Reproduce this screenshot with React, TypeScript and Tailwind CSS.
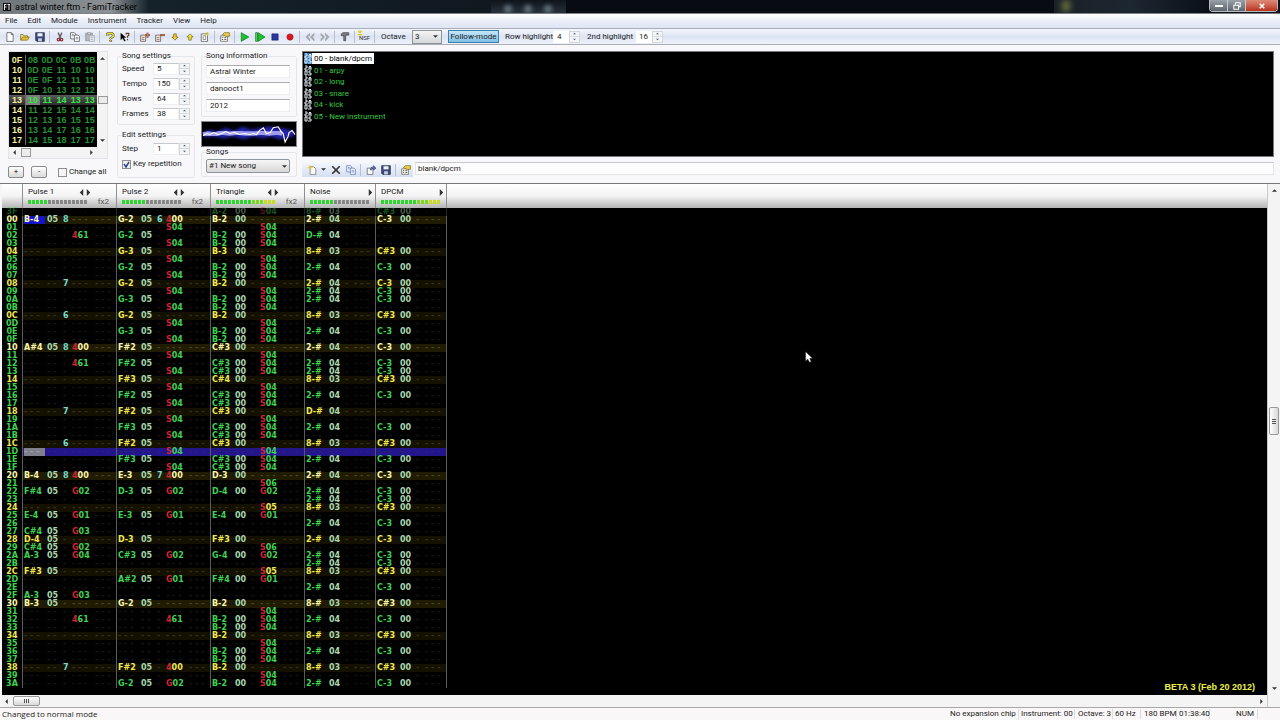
import React from 'react';
import clsx from 'clsx';

interface Channel {
  name: string;
  level: number;
  effects: number;
  arrows: 'both' | 'right';
  rows: Record<string, string>;
}

// "note inst vol fx", dots stand for empty fields
const parseRows = (source: string): Record<string, string> => {
  const rows: Record<string, string> = {};
  source.split('|').forEach((entry) => {
    const [row, ...fields] = entry.trim().split(' ');
    rows[row] = fields.join(' ');
  });
  return rows;
};

const PULSE_1 = parseRows(
  '00 B-4 05 8 . | 02 . . . 461 | 08 . . 7 . | 0C . . 6 . | 10 A#4 05 8 400 | 12 . . . 461 | 18 . . 7 . | 1C . . 6 . | ' +
    '20 B-4 05 8 400 | 22 F#4 05 . G02 | 25 E-4 05 . G01 | 27 C#4 05 . G03 | 28 D-4 05 . . | 29 C#4 05 . G02 | ' +
    '2A A-3 05 . G04 | 2C F#3 05 . . | 2F A-3 05 . G03 | 30 B-3 05 . . | 32 . . . 461 | 38 . . 7 .'
);

const PULSE_2 = parseRows(
  '00 G-2 05 6 400 | 01 . . . S04 | 02 G-2 05 . . | 03 . . . S04 | 04 G-3 05 . . | 05 . . . S04 | 06 G-2 05 . . | ' +
    '07 . . . S04 | 08 G-2 05 . . | 09 . . . S04 | 0A G-3 05 . . | 0B . . . S04 | 0C G-2 05 . . | 0D . . . S04 | ' +
    '0E G-3 05 . . | 0F . . . S04 | 10 F#2 05 . . | 11 . . . S04 | 12 F#2 05 . . | 13 . . . S04 | 14 F#3 05 . . | ' +
    '15 . . . S04 | 16 F#2 05 . . | 17 . . . S04 | 18 F#2 05 . . | 19 . . . S04 | 1A F#3 05 . . | 1B . . . S04 | ' +
    '1C F#2 05 . . | 1D . . . S04 | 1E F#3 05 . . | 1F . . . S04 | 20 E-3 05 7 400 | 22 D-3 05 . G02 | ' +
    '25 E-3 05 . G01 | 28 D-3 05 . . | 2A C#3 05 . G02 | 2D A#2 05 . G01 | 30 G-2 05 . . | 32 . . . 461 | ' +
    '38 F#2 05 . 400 | 3A G-2 05 . G02'
);

const TRIANGLE = parseRows(
  '3F A-2 00 . S04 | 00 B-2 00 . . | 01 . . . S04 | 02 B-2 00 . S04 | 03 B-2 00 . S04 | 04 B-3 00 . . | 05 . . . S04 | ' +
    '06 B-2 00 . S04 | 07 B-2 00 . S04 | 08 B-2 00 . . | 09 . . . S04 | 0A B-2 00 . S04 | 0B B-2 00 . S04 | ' +
    '0C B-2 00 . . | 0D . . . S04 | 0E B-2 00 . S04 | 0F B-2 00 . S04 | 10 C#3 00 . . | 11 . . . S04 | ' +
    '12 C#3 00 . S04 | 13 C#3 00 . S04 | 14 C#4 00 . . | 15 . . . S04 | 16 C#3 00 . S04 | 17 C#3 00 . S04 | ' +
    '18 C#3 00 . . | 19 . . . S04 | 1A C#3 00 . S04 | 1B C#3 00 . S04 | 1C C#3 00 . . | 1D . . . S04 | ' +
    '1E C#3 00 . S04 | 1F C#3 00 . S04 | 20 D-3 00 . . | 21 . . . S06 | 22 D-4 00 . G02 | 24 . . . S05 | ' +
    '25 E-4 00 . G01 | 28 F#3 00 . . | 29 . . . S06 | 2A G-4 00 . G02 | 2C . . . S05 | 2D F#4 00 . G01 | ' +
    '30 B-2 00 . . | 31 . . . S04 | 32 B-2 00 . S04 | 33 B-2 00 . S04 | 34 B-2 00 . . | 35 . . . S04 | ' +
    '36 B-2 00 . S04 | 37 B-2 00 . S04 | 38 B-2 00 . . | 39 . . . S04 | 3A B-2 00 . S04'
);

const HATS = ['00', '06', '08', '09', '0A', '0E', '10', '12', '13', '16', '1A', '1E', '20', '22', '23', '26', '28', '2A', '2B', '2E', '32', '36', '3A'];
const SNARES = ['3F', '04', '0C', '14', '1C', '24', '2C', '30', '34', '38'];

const NOISE: Record<string, string> = { '02': 'D-# 04 . .', '18': 'D-# 04 . .' };
const DPCM: Record<string, string> = {};
HATS.forEach((r) => {
  NOISE[r] = '2-# 04 . .';
  DPCM[r] = 'C-3 00 . .';
});
SNARES.forEach((r) => {
  NOISE[r] = '8-# 03 . .';
  DPCM[r] = 'C#3 00 . .';
});

const CHANNELS: Channel[] = [
  { name: 'Pulse 1', level: 5, effects: 2, arrows: 'both', rows: PULSE_1 },
  { name: 'Pulse 2', level: 6, effects: 2, arrows: 'both', rows: PULSE_2 },
  { name: 'Triangle', level: 15, effects: 2, arrows: 'both', rows: TRIANGLE },
  { name: 'Noise', level: 6, effects: 1, arrows: 'right', rows: NOISE },
  { name: 'DPCM', level: 15, effects: 1, arrows: 'right', rows: DPCM },
];

const hex = (n: number) => n.toString(16).toUpperCase().padStart(2, '0');
const ROW_NUMBERS = [0x3f, ...Array.from({ length: 0x3b }, (_, i) => i)];

const FRAMES = [
  ['0F', '08', '0D', '0C', '0B', '0B'],
  ['10', '0D', '0E', '11', '10', '10'],
  ['11', '0E', '0F', '12', '11', '11'],
  ['12', '0F', '10', '13', '12', '12'],
  ['13', '10', '11', '14', '13', '13'],
  ['14', '11', '12', '15', '14', '14'],
  ['15', '12', '13', '16', '15', '15'],
  ['16', '13', '14', '17', '16', '16'],
  ['17', '14', '15', '18', '17', '17'],
];

const INSTRUMENTS = ['00 - blank/dpcm', '01 - arpy', '02 - long', '03 - snare', '04 - kick', '05 - New instrument'];

const ICONS: Record<string, React.ReactNode> = {
  New: <path d="M3 1h7l3 3v11H3z M10 1v3h3" fill="#fff" stroke="#333" />,
  Open: (
    <>
      <path d="M1 13V4h4l1 2h6v2" fill="#f6e08a" stroke="#6b5a10" />
      <path d="M1 13l3-5h11l-3 5z" fill="#e8c33c" stroke="#6b5a10" />
    </>
  ),
  Save: (
    <>
      <path d="M1 1h14v14H3l-2-2z" fill="#3a4a78" stroke="#1b2238" />
      <path d="M4 2h8v5H4z" fill="#eef2fa" />
      <path d="M5 10h6v5H5z" fill="#c7cede" />
    </>
  ),
  Cut: (
    <>
      <path d="M5 1l4 9M11 1L7 10" stroke="#555" strokeWidth="2" />
      <circle cx="5.5" cy="12" r="2" fill="none" stroke="#8c2f36" strokeWidth="2" />
      <circle cx="10.5" cy="12" r="2" fill="none" stroke="#8c2f36" strokeWidth="2" />
    </>
  ),
  Copy: (
    <>
      <path d="M1 1h6l2 2v8H1z" fill="#fff" stroke="#333" />
      <path d="M7 5h6l2 2v8H7z" fill="#fff" stroke="#333" />
      <path d="M3 4h3M3 6h3M9 9h4M9 11h4" stroke="#555" />
    </>
  ),
  'Copy instrument': (
    <>
      <path d="M1 1h6l2 2v8H1z" fill="#eef3fd" stroke="#4a64a4" />
      <path d="M7 5h6l2 2v8H7z" fill="#eef3fd" stroke="#4a64a4" />
      <path d="M3 4h3M3 6h3M9 9h4M9 11h4" stroke="#5e78b6" />
    </>
  ),
  Paste: (
    <>
      <path d="M1 2h11v12H1z" fill="#b4b7bd" stroke="#83868c" />
      <path d="M4 1h5v3H4z" fill="#dcdfe4" stroke="#83868c" />
      <path d="M7 6h8v9H7z" fill="#e9ecf1" stroke="#94979d" />
      <path d="M9 9h4M9 12h4" stroke="#94979d" />
    </>
  ),
  About: (
    <>
      <path d="M4 6V3l2-1h5l2 2v3l-4 3v1" fill="none" stroke="#444" strokeWidth="4" />
      <path d="M4 6V3l2-1h5l2 2v3l-4 3v1" fill="none" stroke="#f0e02c" strokeWidth="2.4" />
      <circle cx="9" cy="14" r="1.6" fill="#f0e02c" stroke="#333" />
    </>
  ),
  'Context help': (
    <>
      <path d="M1 1v12l3-3 3 5 2-1-3-5h4z" fill="#000" />
      <path d="M10 4V2h4v3l-2 2v2M12 11v2" fill="none" stroke="#713a18" strokeWidth="2" />
    </>
  ),
  'Add frame': (
    <>
      <path d="M1 5h8v10H1z" fill="#f4dfd2" stroke="#444" />
      <path d="M3 9h4M3 12h4" stroke="#555" />
      <path d="M8 5h8M12 1v8" stroke="#7c3a24" strokeWidth="3" />
      <path d="M8 5h8M12 1v8" stroke="#e49c6c" />
    </>
  ),
  'Remove frame': (
    <>
      <path d="M1 5h8v10H1z" fill="#f4dfd2" stroke="#444" />
      <path d="M3 9h4M3 12h4" stroke="#555" />
      <path d="M8 5h8" stroke="#7c3a24" strokeWidth="3" />
      <path d="M8 5h8" stroke="#e49c6c" />
    </>
  ),
  'Move down': <path d="M6 3h4v5h3l-5 5-5-5h3z" fill="#f2cf33" stroke="#6b5208" />,
  'Move up': <path d="M6 13h4V8h3L8 3 3 8h3z" fill="#f5e536" stroke="#5f5a08" />,
  'Duplicate frame': (
    <>
      <path d="M2 3h10v12H2z" fill="#fff" stroke="#333" />
      <path d="M5 6h4v6H5z" fill="none" stroke="#555" />
      <path d="M9 6l5-5M10 1l4 4M12 0v6" stroke="#d4c81e" strokeWidth="1.5" />
    </>
  ),
  Properties: (
    <>
      <path d="M1 6h11v9H1z" fill="#f7f3e2" stroke="#555" />
      <path d="M3 9h2M7 9h3M3 12h2M7 12h3" stroke="#555" strokeWidth="1.5" />
      <path d="M4 4l3-3h8v6h-5z" fill="#e9cf45" stroke="#6e5d14" />
    </>
  ),
  Play: <path d="M2 1l12 7-12 7z" fill="#19c42b" stroke="#0a6b14" />,
  'Play pattern': (
    <>
      <path d="M1 1h3v14H1z" fill="#5fd36a" stroke="#0a6b14" />
      <path d="M5 1l11 7-11 7z" fill="#19c42b" stroke="#0a6b14" />
    </>
  ),
  Stop: <path d="M3 3h10v10H3z" fill="#2c38a0" stroke="#151c5c" />,
  Record: <circle cx="8" cy="8" r="5" fill="#e2121e" stroke="#8e1018" />,
  'Previous song': <path d="M8 1L1 8l7 7V11L5 8l3-3zM15 1L8 8l7 7V11l-3-3 3-3z" fill="#9ea3ac" />,
  'Next song': <path d="M8 1l7 7-7 7v-4l3-3-3-3zM1 1l7 7-7 7v-4l3-3-3-3z" fill="#9ea3ac" />,
  Settings: <path d="M2 3l3-2h9v4H9v9H6V6H2z" fill="#777c84" stroke="#33363b" />,
  Delete: <path d="M2 2l12 12M14 2L2 14" stroke="#333" strokeWidth="2.6" />,
  'Load instrument': (
    <>
      <path d="M2 5h9v10H2z" fill="#fff" stroke="#444" />
      <path d="M7 8c0-4 2-5 5-5V1l4 4-4 3V6c-2 0-3 0-3 2z" fill="#5c74b8" stroke="#2b3a6e" />
    </>
  ),
};

const Icon = ({ name }: { name: string }) => (
  <svg viewBox="0 0 16 16" className="w-[10px] h-[10px]" fill="none">
    {ICONS[name]}
  </svg>
);

const ToolButton = ({ name }: { name: string }) => (
  <button aria-label={name} className="w-[15px] h-[13px] flex items-center justify-center shrink-0">
    <Icon name={name} />
  </button>
);

const Separator = () => <span className="w-px h-3 mx-[2px] bg-[#b9bfcc] shrink-0" />;

const Spinner = () => (
  <span className="flex flex-col w-[11px] h-3 border border-[#d3d6dc] bg-[#f4f5f7] shrink-0">
    {['M1 3l2-2 2 2z', 'M1 1l2 2 2-2z'].map((d, i) => (
      <button key={d} aria-label={i ? 'Decrease' : 'Increase'} className="flex-1 flex items-center justify-center first:border-b border-[#d5d8de]">
        <svg viewBox="0 0 6 4" className="w-[5px] h-[3px]">
          <path d={d} fill="#4a5c78" />
        </svg>
      </button>
    ))}
  </span>
);

const NumberField = ({ id, label, value }: { id: string; label: string; value: string }) => (
  <div className="flex items-center h-[15px]">
    <label htmlFor={id} className="w-[31px]">{label}</label>
    <input id={id} defaultValue={value} className="w-[26px] h-3 pl-[3px] bg-white border border-[#eceef1] border-t-[#c5c8cd]" />
    <Spinner />
  </div>
);

const Arrow = ({ dir, className }: { dir: 'up' | 'down' | 'left' | 'right'; className?: string }) => {
  const paths = { up: 'M0 6l4-4 4 4z', down: 'M0 2l4 4 4-4z', left: 'M6 0L2 4l4 4z', right: 'M2 0l4 4-4 4z' };
  return (
    <svg viewBox="0 0 8 8" className={clsx('shrink-0', className ?? 'w-[5px] h-[5px]')}>
      <path d={paths[dir]} fill="#333" />
    </svg>
  );
};

const TitleBar = () => (
  <header className="h-[14px] flex items-center bg-[#0b1016] border-b border-[#7c8087] overflow-hidden">
    <div className="h-full flex items-center gap-1 pl-[3px] pr-3 bg-linear-to-r from-[#6f767a] via-[#8b9195] via-75% to-[#15222a]">
      <svg viewBox="0 0 16 16" className="w-2 h-[10px]">
        <path d="M0 0h16v16H0z" fill="#111" />
        <path d="M2 2h5v2H4v3h3v2H4v5H2zM9 2h5v2h-1v10h-2V4H9z" fill="#e8e8e8" />
      </svg>
      <h1 className="text-[9px] leading-3 text-black">astral winter.ftm - FamiTracker</h1>
    </div>
    <div className="h-full flex-[35] bg-linear-to-r from-[#15222a] to-[#101820]" />
    <div className="h-full w-[75px] flex items-end justify-around px-2 bg-linear-to-b from-[#0e141c] to-[#28323c]">
      <span className="w-2 h-2 rounded-full bg-[#64747f] blur-[2px]" />
      <span className="w-2 h-2 rounded-full bg-[#64747f] blur-[2px]" />
      <span className="w-2 h-2 rounded-full bg-[#64747f] blur-[2px]" />
    </div>
    <div className="h-full flex-[50] bg-[#080b12]" />
    <div className="h-full w-[155px] pl-2 bg-linear-to-r from-[#1a2026] via-[#1d2731] to-[#0b1018]">
      <span className="block w-2 h-3 rounded-full bg-[#6d7440] blur-[3px]" />
    </div>
    <div className="flex self-start h-3 mr-[2px] rounded-b-sm overflow-hidden border border-t-0 border-[#b8bcc0] shrink-0">
      <button aria-label="Minimize" className="w-[18px] flex items-center justify-center bg-linear-to-b from-[#9aa1a8] to-[#5d666e] border-r border-[#c5c8cc]">
        <span className="w-2 h-[2px] bg-white" />
      </button>
      <button aria-label="Restore" className="w-[18px] flex items-center justify-center bg-linear-to-b from-[#9aa1a8] to-[#5d666e] border-r border-[#c5c8cc]">
        <svg viewBox="0 0 10 10" className="w-2 h-2" fill="none" stroke="#fff" strokeWidth="1.3">
          <path d="M3 3V1h6v5H7M1 4h6v5H1z" />
        </svg>
      </button>
      <button aria-label="Close" className="w-[31px] flex items-center justify-center bg-linear-to-b from-[#dd8a78] to-[#b7301b]">
        <svg viewBox="0 0 8 8" className="w-[6px] h-[6px]" stroke="#fff" strokeWidth="2">
          <path d="M1 1l6 6M7 1L1 7" />
        </svg>
      </button>
    </div>
  </header>
);

const MenuBar = () => (
  <nav className="h-[15px] flex items-center gap-[10px] pl-[5px] border-b border-[#a9adb6] bg-linear-to-b from-white via-[#e9edf8] to-[#dfe5f4]">
    {['File', 'Edit', 'Module', 'Instrument', 'Tracker', 'View', 'Help'].map((item) => (
      <button key={item}>{item}</button>
    ))}
  </nav>
);

const MainToolbar = () => (
  <div className="h-4 flex items-center pl-[2px] border-b border-[#a9adb6] bg-linear-to-b from-[#f4f6fc] via-[#dce4f3] to-[#eef1f9]">
    {['New', 'Open', 'Save', '|', 'Cut', 'Copy', 'Paste', '|', 'About', 'Context help', '|', 'Add frame', 'Remove frame', 'Move down', 'Move up', 'Duplicate frame', '|', 'Properties', '|', 'Play', 'Play pattern', 'Stop', 'Record', '|', 'Previous song', 'Next song', '|', 'Settings', '|'].map(
      (name, i) => (name === '|' ? <Separator key={i} /> : <ToolButton key={i} name={name} />)
    )}
    <button className="relative w-[15px] pt-[2px] text-[6px] leading-[10px] text-[#333] text-center">
      NSF
      <svg viewBox="0 0 8 8" className="absolute left-0 -top-px w-[6px] h-[6px]" stroke="#d8cf1c" strokeWidth="1.4">
        <path d="M1 1l6 6M7 1L1 7M4 0v8" />
      </svg>
    </button>
    <Separator />
    <label htmlFor="octave" className="w-[35px] pl-1">Octave</label>
    <span className="relative flex items-center">
      <select id="octave" defaultValue="3" className="appearance-none w-[30px] h-[14px] pl-[2px] border border-[#8f949c] bg-linear-to-b from-[#f4f4f4] to-[#d5d7da]">
        <option>3</option>
      </select>
      <Arrow dir="down" className="absolute right-1 w-[5px] h-[5px] pointer-events-none" />
    </span>
    <button className="w-[51px] h-[13px] ml-[6px] border border-[#3c7fb1] bg-linear-to-b from-[#c5e6f8] to-[#7fc0e4] text-center">Follow-mode</button>
    <label htmlFor="row-hl" className="w-[54px] pl-[6px]">Row highlight</label>
    <input id="row-hl" defaultValue="4" className="w-4 h-3 bg-white pl-1" />
    <Spinner />
    <label htmlFor="second-hl" className="w-[56px] pl-[7px]">2nd highlight</label>
    <input id="second-hl" defaultValue="16" className="w-4 h-3 bg-white pl-[3px]" />
    <Spinner />
  </div>
);

const FrameEditor = () => (
  <section className="w-[100px] shrink-0">
    <div className="grid grid-cols-[88px_11px] border border-[#e2e4e7] bg-[#f3f3f4]">
      <div className="bg-black pt-[3px] pb-[2px]">
        <table className="table-fixed w-full border-separate border-spacing-0 font-['Liberation_Sans',sans-serif] text-[9px] leading-[10px] font-bold">
          <tbody>
            {FRAMES.map(([label, ...cells]) => {
              const active = label === '13';
              return (
                <tr key={label} className={clsx('h-[10px]', active && 'bg-linear-to-b from-[#5a5a5a] to-[#2c2c2c]')}>
                  <th className="w-[17px] p-0 text-center text-[#f4f0a0] border-r border-[#6a6a6a]">{label}</th>
                  {cells.map((cell, i) => (
                    <td
                      key={i}
                      className={clsx('p-0 text-center', active ? 'text-[#35e84a]' : 'text-[#279236]', active && i === 0 && 'bg-[#7d7d7d]')}
                    >
                      {cell}
                    </td>
                  ))}
                </tr>
              );
            })}
          </tbody>
        </table>
      </div>
      <div className="flex flex-col items-center justify-between py-1">
        <Arrow dir="up" />
        <span className="w-[10px] h-2 border border-[#999] bg-[#ececec]" />
        <Arrow dir="down" />
      </div>
      <div className="h-[11px] flex items-center px-[3px]">
        <Arrow dir="left" />
        <span className="w-[10px] h-[9px] ml-1 mr-auto border border-[#999] bg-[#ececec]" />
        <Arrow dir="right" />
      </div>
    </div>
    <div className="flex items-center pt-[7px]">
      <button className="w-4 h-[12px] leading-[10px] border border-[#8a8a8a] rounded-xs bg-linear-to-b from-white to-[#d9d9d9]">+</button>
      <button className="w-4 h-[12px] ml-[7px] leading-[10px] border border-[#8a8a8a] rounded-xs bg-linear-to-b from-white to-[#d9d9d9]">-</button>
      <label className="flex items-center gap-[2px] ml-[11px]">
        <input type="checkbox" className="appearance-none w-[9px] h-[9px] border border-[#8e8f8f] bg-[#f5f5f5]" />
        Change all
      </label>
    </div>
  </section>
);

const Fieldset = ({ title, className, children }: { title: string; className?: string; children: React.ReactNode }) => (
  <fieldset className={clsx('border border-[#e4e6e9] rounded-xs px-1', className)}>
    <legend className="leading-[10px]">{title}</legend>
    {children}
  </fieldset>
);

const SongSettings = () => (
  <section className="w-[78px] shrink-0">
    <Fieldset title="Song settings" className="h-[74px]">
      <NumberField id="speed" label="Speed" value="5" />
      <NumberField id="tempo" label="Tempo" value="150" />
      <NumberField id="rows" label="Rows" value="64" />
      <NumberField id="frames" label="Frames" value="38" />
    </Fieldset>
    <Fieldset title="Edit settings" className="h-[48px] mt-[5px]">
      <div className="pt-px">
        <NumberField id="step" label="Step" value="1" />
      </div>
      <label className="flex items-center gap-[2px] h-4">
        <span className="relative flex">
          <input type="checkbox" defaultChecked className="appearance-none w-[9px] h-[9px] border border-[#8e8f8f] bg-[#eef0f6]" />
          <svg viewBox="0 0 9 9" className="absolute inset-0 w-[9px] h-[9px] pointer-events-none" fill="none" stroke="#31478f" strokeWidth="1.5">
            <path d="M2 4l2 3 3-5" />
          </svg>
        </span>
        Key repetition
      </label>
    </Fieldset>
  </section>
);

const Waveform = () => (
  <svg viewBox="0 0 95 25" preserveAspectRatio="none" className="w-full h-[26px] mt-1 bg-black border border-[#888]">
    <defs>
      <filter id="glow" x="-10%" y="-50%" width="120%" height="200%">
        <feGaussianBlur stdDeviation="1.6" />
      </filter>
      <filter id="haze" x="-10%" y="-50%" width="120%" height="200%">
        <feGaussianBlur stdDeviation=".7" />
      </filter>
    </defs>
    <path
      d="M1 11L8 8L16 10L24 6L32 9L41 5L50 8L60 6L68 5L76 6L84 7L92 9L94 14L86 17L78 18L70 15L62 17L52 15L42 18L32 15L22 17L12 15L2 16z"
      fill="#2a2acc"
      filter="url(#glow)"
      opacity=".85"
    />
    <path
      d="M1 13L6 12L12 13L20 11L28 12L36 11L44 12L52 12L60 11L68 12L76 11L81 12"
      fill="none"
      stroke="#b4b4fa"
      strokeWidth="4.5"
      filter="url(#haze)"
      opacity=".85"
    />
    <path
      d="M1 14L5 12L8 13L12 11L16 13L20 12L24 10L28 12L33 11L38 13L43 12L48 13L52 12L55 13L58 9L62 6L65 12L69 11L72 6L77 5L80 10L82 12L84 21L87 15L88 11L91 9L94 13"
      fill="none"
      stroke="#fff"
      strokeWidth="1.2"
    />
  </svg>
);

const SongInformation = () => (
  <section className="w-[96px] shrink-0">
    <Fieldset title="Song information" className="h-[66px]">
      <div className="flex flex-col gap-1 pt-1">
        {['Astral Winter', 'danooct1', '2012'].map((value, i) => (
          <input
            key={value}
            aria-label={['Title', 'Author', 'Copyright'][i]}
            defaultValue={value}
            className="w-[84px] h-[13px] pl-[3px] bg-white border border-[#eceef1] border-t-[#abadb3]"
          />
        ))}
      </div>
    </Fieldset>
    <Waveform />
    <Fieldset title="Songs" className="h-[30px]">
      <span className="relative flex items-center mt-[2px]">
        <select aria-label="Songs" className="appearance-none w-[84px] h-[14px] pl-[2px] border border-[#8f949c] rounded-xs bg-linear-to-b from-[#f6f6f6] to-[#d8d8d8]">
          <option>#1 New song</option>
        </select>
        <Arrow dir="down" className="absolute right-[5px] w-[5px] h-[5px] pointer-events-none" />
      </span>
    </Fieldset>
  </section>
);

const InstrumentPanel = () => (
  <section className="flex-1 min-w-0">
    <div className="h-[106px] bg-black border border-[#777] pt-px">
      <ul className="h-[69px] flex flex-col justify-between">
        {INSTRUMENTS.map((name, i) => (
          <li key={name} className="flex items-center h-[11px] pl-px">
            <svg viewBox="0 0 8 11" className={clsx('w-2 h-[11px]', i === 0 && 'bg-[#2f6fae]')} fill="none" stroke="#e6eef6">
              <path d="M1 1h2v2H1v2h3M5 5V2l1-1 1 1v3M5 3h2M1 6h2v4H1V6M7 6H5v2h2v2H4" />
            </svg>
            <button className={clsx('px-[2px] h-[11px] leading-[11px]', i === 0 ? 'bg-white text-black' : 'text-[#35c840]')}>
              {name}
            </button>
          </li>
        ))}
      </ul>
    </div>
    <div className="h-[15px] mt-[5px] flex items-center">
      <div className="h-full flex items-center pl-[2px] bg-linear-to-b from-[#f4f7fd] to-[#d5dff1]">
        <button aria-label="New instrument" className="w-[15px] flex justify-center">
          <svg viewBox="0 0 16 16" className="w-[10px] h-[10px]">
            <path d="M5 3h6l3 3v9H5z" fill="#fff" stroke="#555" />
            <path d="M5 0v9M1 4h8M2 1l6 6M8 1L2 7" stroke="#dfc534" />
          </svg>
        </button>
        <button aria-label="Instrument type" className="w-[9px] flex justify-center">
          <Arrow dir="down" />
        </button>
        <ToolButton name="Delete" />
        <ToolButton name="Copy instrument" />
        <Separator />
        <ToolButton name="Load instrument" />
        <ToolButton name="Save" />
        <Separator />
        <ToolButton name="Properties" />
      </div>
      <input
        aria-label="Instrument name"
        defaultValue="blank/dpcm"
        className="flex-1 h-[13px] self-start pl-[2px] ml-[2px] bg-[#fdfdfe] border border-[#e5e6ea] border-t-[#c5c8cd]"
      />
    </div>
  </section>
);

const ChannelHeader = ({ channel }: { channel: Channel }) => (
  <div className={clsx('shrink-0 h-full pt-[3px] pl-[5px] pr-1 border-r border-[#909090]', channel.effects === 2 ? 'w-[94px]' : 'w-[71px]')}>
    <div className="flex items-center justify-between h-[10px]">
      <button>{channel.name}</button>
      <span className={clsx('flex', channel.effects === 2 ? 'mr-5' : '-mr-[3px]')}>
        {channel.arrows === 'both' && <Arrow dir="left" className="w-[7px] h-[7px]" />}
        <Arrow dir="right" className="w-[7px] h-[7px]" />
      </span>
    </div>
    <div className="flex items-center justify-between h-[10px]">
      <span className="flex gap-px -mt-px">
        {Array.from({ length: 15 }, (_, i) => (
          <span
            key={i}
            className={clsx('w-[3px] h-1', i >= channel.level ? 'bg-[#858585]' : i > 11 ? 'bg-[#c8dc20]' : i > 8 ? 'bg-[#7cd820]' : 'bg-[#2fd62f]')}
          />
        ))}
      </span>
      {channel.effects === 2 && <button className="text-[#555] pr-[3px]">fx2</button>}
    </div>
  </div>
);

const PatternCell = ({ row, channel, index }: { row: number; channel: Channel; index: number }) => {
  const first = row % 16 === 0;
  const second = row % 4 === 0;
  const [note, inst, vol, fx] = (channel.rows[hex(row)] ?? '. . . .').split(' ');
  const empty = first ? 'text-[#4a4612]' : second ? 'text-[#37340c]' : 'text-[#141a14]';
  const noteColor = first ? 'text-[#fbf8a8]' : second ? 'text-[#f0ea50]' : 'text-[#3fd452]';
  const blue = row === 0x1d;
  const dash = blue ? 'text-[#2c1d8c]' : empty;

  return (
    <td className="p-0 border-r border-[#5c5c5c]">
      <div className="flex gap-[2px] pl-px h-2">
        <span
          className={clsx(
            'w-[21px]',
            note === '.' ? !(index === 0 && blue) && dash : noteColor,
            index === 0 && row === 0 && 'bg-[#1414c8]',
            index === 0 && blue && 'bg-[#80808c] text-[#a0a0a8]'
          )}
        >
          {note === '.' ? '- - -' : note}
        </span>
        <span className={clsx('w-[14px]', inst === '.' ? dash : 'text-[#a9d8ae]')}>{inst === '.' ? '- -' : inst}</span>
        <span className={clsx('w-[7px]', vol === '.' ? dash : 'text-[#74dcd8]')}>{vol === '.' ? '-' : vol}</span>
        <span className={clsx('w-[21px]', fx === '.' ? dash : noteColor)}>
          {fx === '.' ? (
            '- - -'
          ) : (
            <>
              <span className="text-[#d0243a]">{fx[0]}</span>
              {fx.slice(1)}
            </>
          )}
        </span>
        {channel.effects === 2 && <span className={clsx('w-5', dash)}>- - -</span>}
      </div>
    </td>
  );
};

const PatternEditor = () => (
  <main className="flex flex-1 border-t border-[#777] bg-[#f6f6f7]">
    <div className="flex-1 min-w-0 flex flex-col ml-[2px]">
      <div className="h-6 flex bg-linear-to-b from-white via-[#f4f4f4] via-50% to-[#b4b4b4]">
        <div className="w-[21px] shrink-0 border-r border-[#909090]" />
        {CHANNELS.map((channel) => (
          <ChannelHeader key={channel.name} channel={channel} />
        ))}
      </div>
      <div className="relative flex-1 bg-black pb-[6px]">
        <table className="w-[445px] table-fixed border-separate border-spacing-0 font-['DejaVu_Sans',sans-serif] text-[8px] leading-2 font-bold">
          <colgroup>
            <col className="w-[21px]" />
            {CHANNELS.map((c) => (
              <col key={c.name} className={c.effects === 2 ? 'w-[94px]' : 'w-[71px]'} />
            ))}
          </colgroup>
          <tbody>
            {ROW_NUMBERS.map((row) => (
              <tr
                key={row}
                className={clsx(
                  'h-2',
                  row === 0x3f && 'opacity-40',
                  row === 0x1d ? 'bg-[#22168a]' : row % 16 === 0 ? 'bg-[#201c04]' : row % 4 === 0 && 'bg-[#141103]'
                )}
              >
                <th
                  className={clsx(
                    'p-0 text-center border-r border-[#5c5c5c] bg-black',
                    row % 16 === 0 ? 'text-[#fbf8a8]' : row % 4 === 0 ? 'text-[#f0ea50]' : 'text-[#3fd452]'
                  )}
                >
                  <div className="h-2">{hex(row)}</div>
                </th>
                {CHANNELS.map((channel, i) => (
                  <PatternCell key={channel.name} row={row} channel={channel} index={i} />
                ))}
              </tr>
            ))}
          </tbody>
        </table>
        <p className="absolute right-3 bottom-[3px] text-[9px] leading-[10px] font-bold text-[#eef04a] font-['Liberation_Sans',sans-serif]">
          BETA 3 (Feb 20 2012)
        </p>
      </div>
      <div className="h-3 flex items-center justify-between pl-[2px] pr-[3px] bg-[#f4f4f5]">
        <div className="flex items-center gap-1">
          <Arrow dir="left" />
          <span className="w-[27px] h-[10px] flex items-center justify-center gap-px border border-[#999] rounded-xs bg-linear-to-b from-white to-[#d8d8d8]">
            <span className="w-px h-1 bg-[#555]" />
            <span className="w-px h-1 bg-[#555]" />
            <span className="w-px h-1 bg-[#555]" />
          </span>
        </div>
        <Arrow dir="right" />
      </div>
    </div>
    <div className="w-[13px] flex flex-col items-center pt-1 pb-4 border-l border-[#c8c8c8] bg-[#f4f4f5]">
      <Arrow dir="up" />
      <span className="grow-[214]" />
      <span className="w-[10px] h-[28px] flex flex-col items-center justify-center gap-px border border-[#999] rounded-xs bg-linear-to-r from-white to-[#d8d8d8]">
        <span className="w-1 h-px bg-[#555]" />
        <span className="w-1 h-px bg-[#555]" />
        <span className="w-1 h-px bg-[#555]" />
      </span>
      <span className="grow-[251]" />
      <Arrow dir="down" />
    </div>
  </main>
);

const StatusBar = () => (
  <footer className="h-[13px] flex items-center justify-between pl-[2px] pr-[22px] border-t border-[#a8a8a8] bg-[#faf7f8]">
    <span className="font-['Open_Sans',sans-serif]">Changed to normal mode</span>
    <div className="flex items-center [&>span]:border-r [&>span]:border-[#dcdcdc]">
      <span className="w-[69px]">No expansion chip</span>
      <span className="w-[56px] pl-[2px]">Instrument: 00</span>
      <span className="w-[38px] pl-[3px]">Octave: 3</span>
      <span className="w-[28px] pl-[2px]">60 Hz</span>
      <span className="w-[36px] pl-[3px]">180 BPM</span>
      <span className="w-[33px] pl-[2px]">01:38:40</span>
      <span className="w-[22px]" />
      <span className="w-[26px] pl-1">NUM</span>
    </div>
  </footer>
);

export default function App() {
  return (
    <div className="relative min-h-screen flex flex-col bg-[#f8f8fa] text-[#1a1a1a] text-[8px] leading-[10px] whitespace-nowrap font-['Roboto',sans-serif]">
      <TitleBar />
      <MenuBar />
      <MainToolbar />
      <div className="flex pt-[6px] pl-2 pr-[6px] pb-[5px]">
        <FrameEditor />
        <div className="flex gap-[6px] pl-[9px]">
          <SongSettings />
          <SongInformation />
        </div>
        <div className="flex-1 flex pl-[5px]">
          <InstrumentPanel />
        </div>
      </div>
      <PatternEditor />
      <StatusBar />
      <svg viewBox="0 0 12 18" className="absolute left-[805px] top-[350px] w-2 h-[14px] pointer-events-none">
        <path d="M1 1v14l3-3 3 5 2-1-2-5h4z" fill="#fff" stroke="#333" strokeWidth=".6" />
      </svg>
    </div>
  );
}
